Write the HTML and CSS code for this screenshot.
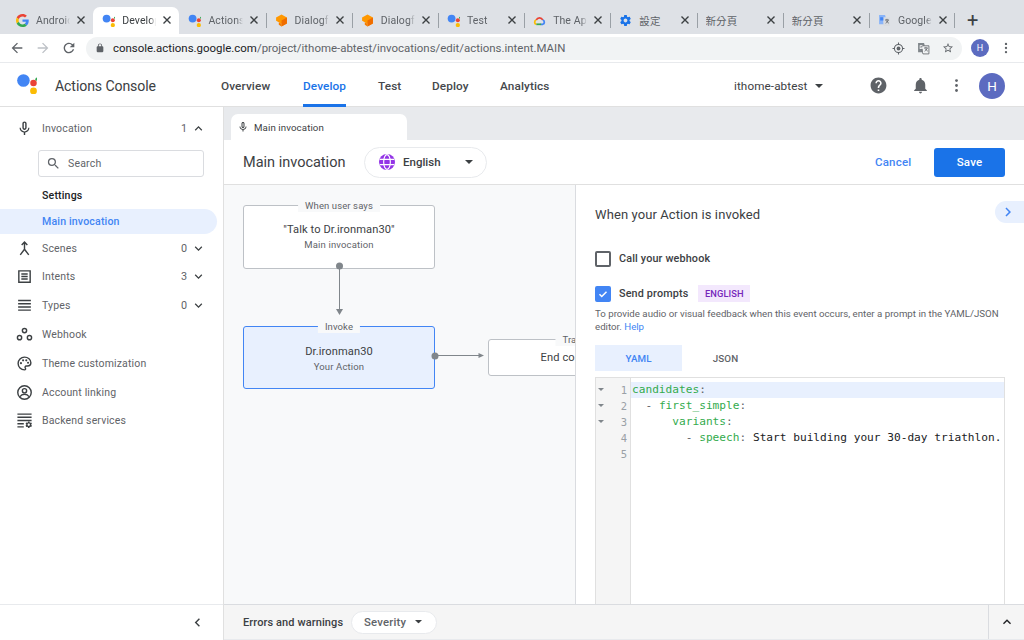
FILE: index.html
```html
<!DOCTYPE html>
<html lang="en">
<head>
<meta charset="utf-8">
<title>Actions Console</title>
<link rel="stylesheet" href="styles.css">
</head>
<body>
<svg class="sprite" aria-hidden="true">
  <symbol id="assistant" viewBox="0 0 24 24"><circle cx="8.5" cy="8.5" r="7.2" fill="#4285f4"/><circle cx="20" cy="11.5" r="3.7" fill="#ea4335"/><circle cx="20" cy="20.5" r="3.9" fill="#fbbc04"/><circle cx="24" cy="7" r="1.9" fill="#34a853"/></symbol>
  <symbol id="gfav" viewBox="0 0 48 48"><path fill="#EA4335" d="M24 9.5c3.54 0 6.71 1.22 9.21 3.6l6.85-6.85C35.9 2.38 30.47 0 24 0 14.62 0 6.51 5.38 2.56 13.22l7.98 6.19C12.43 13.72 17.74 9.5 24 9.5z"/><path fill="#4285F4" d="M46.98 24.55c0-1.57-.15-3.09-.38-4.55H24v9.02h12.94c-.58 2.96-2.26 5.48-4.78 7.18l7.73 6c4.51-4.18 7.09-10.36 7.09-17.65z"/><path fill="#FBBC05" d="M10.53 28.59c-.48-1.45-.76-2.99-.76-4.59s.27-3.14.76-4.59l-7.98-6.19C.92 16.46 0 20.12 0 24c0 3.88.92 7.54 2.56 10.78l7.97-6.19z"/><path fill="#34A853" d="M24 48c6.48 0 11.93-2.13 15.89-5.81l-7.73-6c-2.15 1.45-4.92 2.3-8.16 2.3-6.26 0-11.57-4.22-13.47-9.91l-7.98 6.19C6.51 42.62 14.62 48 24 48z"/></symbol>
  <symbol id="dialogflow" viewBox="0 0 24 24"><path fill="#ff9800" d="M12 1 22 6.500V17.500L12 23V18L2 12.500V6.500z"/><path fill="#ef6c00" d="M12 12 22 6.500V17.500L12 23z"/><path fill="#f57c00" d="M2 12.500 12 18V23L7 20V15z"/></symbol>
  <symbol id="cloud" viewBox="0 0 24 24"><path fill="none" stroke="#ea4335" stroke-width="3.200" d="M6 11a6.500 6.500 0 0 1 12 0"/><path fill="none" stroke="#4285f4" stroke-width="3.200" d="M18 11a4.200 4.200 0 0 1 0 8h-4"/><path fill="none" stroke="#34a853" stroke-width="3.200" d="M6 19h9"/><path fill="none" stroke="#fbbc04" stroke-width="3.200" d="M6 19a4.200 4.200 0 0 1 0-8"/></symbol>
  <symbol id="gear" viewBox="0 0 24 24"><path d="M19.43 12.98c.04-.32.07-.64.07-.98s-.03-.66-.07-.98l2.110-1.650c.19-.15.24-.42.12-.64l-2-3.460c-.12-.22-.39-.3-.61-.22l-2.490 1c-.52-.4-1.080-.73-1.690-.98l-.38-2.650C14.460 2.180 14.250 2 14 2h-4c-.25 0-.46.18-.49.42l-.38 2.650c-.61.25-1.170.59-1.690.98l-2.490-1c-.23-.09-.49 0-.61.22l-2 3.460c-.13.22-.07.49.12.64l2.110 1.650c-.04.32-.07.65-.07.98s.03.66.07.98l-2.110 1.650c-.19.15-.24.42-.12.64l2 3.460c.12.22.39.3.61.22l2.490-1c.52.4 1.080.73 1.690.98l.38 2.650c.03.24.24.42.49.42h4c.25 0 .46-.18.49-.42l.38-2.650c.61-.25 1.170-.59 1.690-.98l2.490 1c.23.09.49 0 .61-.22l2-3.460c.12-.22.07-.49-.12-.64l-2.110-1.650zM12 15.500c-1.930 0-3.500-1.570-3.500-3.500s1.570-3.500 3.500-3.500 3.500 1.570 3.500 3.500-1.570 3.500-3.500 3.500z"/></symbol>
  <symbol id="translate" viewBox="0 0 24 24"><path fill="#8ab4f8" d="M2 2h11l1 3v14H2z"/><path fill="#dadce0" d="M9 6h13v16H11l-1-3z"/><path fill="#4285f4" d="M4 6h6v6H4z"/><path fill="none" stroke="#5f6368" stroke-width="1.500" d="M13 11h7M16.500 9v2M19 11c-1 3-3 5-5 6M15 12c1 2 3 4 5 5"/></symbol>
  <symbol id="translate-grey" viewBox="0 0 24 24"><path fill="#80868b" d="M2 2h11l1 3v14H2z"/><path fill="#f1f3f4" stroke="#5f6368" stroke-width="1.500" d="M9 7h13v15H11l-1-3z"/><path fill="#fff" d="M5 6h5v1.500H6.500v4H9V10H7.500V8.800H10.500V13H5z"/><path fill="none" stroke="#5f6368" stroke-width="1.500" d="M13 11h7M16.500 9v2M19 11c-1 3-3 5-5 6M15 12c1 2 3 4 5 5"/></symbol>
  <symbol id="close" viewBox="0 0 12 12"><path fill="none" stroke="#3c4043" stroke-width="1.400" d="M2.500 2.500l7 7M9.500 2.500l-7 7"/></symbol>
  <symbol id="mic" viewBox="0 0 24 24"><path d="M12 14c1.660 0 2.990-1.340 2.990-3L15 5c0-1.660-1.340-3-3-3S9 3.340 9 5v6c0 1.660 1.340 3 3 3zm-1-9c0-.55.45-1 1-1s1 .45 1 1v6c0 .55-.45 1-1 1s-1-.45-1-1V5zm6.300 6c0 3-2.540 5.100-5.300 5.100S6.700 14 6.700 11H5c0 3.410 2.720 6.230 6 6.720V21h2v-3.280c3.280-.48 6-3.300 6-6.720h-1.700z"/></symbol>
  <symbol id="more" viewBox="0 0 24 24"><circle cx="12" cy="5" r="2"/><circle cx="12" cy="12" r="2"/><circle cx="12" cy="19" r="2"/></symbol>
  <symbol id="down" viewBox="0 0 24 24"><path d="M16.590 8.590 12 13.170 7.410 8.590 6 10l6 6 6-6z"/></symbol>
  <symbol id="up" viewBox="0 0 24 24"><path d="M12 8l-6 6 1.410 1.410L12 10.830l4.590 4.580L18 14z"/></symbol>
  <symbol id="caret" viewBox="0 0 10 5"><path d="M0 0h10L5 5z"/></symbol>
</svg>

<header class="tabstrip">
  <div class="tab"><svg class="fav"><use href="#gfav"/></svg><span class="tab-label">Android</span><svg class="x"><use href="#close"/></svg></div>
  <div class="tab tab-active"><svg class="fav"><use href="#assistant"/></svg><span class="tab-label">Develop</span><svg class="x"><use href="#close"/></svg></div>
  <div class="tab"><svg class="fav"><use href="#assistant"/></svg><span class="tab-label">Actions</span><svg class="x"><use href="#close"/></svg></div>
  <div class="tab tab-sep"><svg class="fav"><use href="#dialogflow"/></svg><span class="tab-label">Dialogflow</span><svg class="x"><use href="#close"/></svg></div>
  <div class="tab tab-sep"><svg class="fav"><use href="#dialogflow"/></svg><span class="tab-label">Dialogflow</span><svg class="x"><use href="#close"/></svg></div>
  <div class="tab tab-sep"><svg class="fav"><use href="#assistant"/></svg><span class="tab-label">Test</span><svg class="x"><use href="#close"/></svg></div>
  <div class="tab tab-sep"><svg class="fav"><use href="#cloud"/></svg><span class="tab-label">The App</span><svg class="x"><use href="#close"/></svg></div>
  <div class="tab tab-sep"><svg class="fav gear-blue"><use href="#gear"/></svg><span class="tab-label cjk">設定</span><svg class="x"><use href="#close"/></svg></div>
  <div class="tab tab-sep"><span class="tab-label cjk">新分頁</span><svg class="x"><use href="#close"/></svg></div>
  <div class="tab tab-sep"><span class="tab-label cjk">新分頁</span><svg class="x"><use href="#close"/></svg></div>
  <div class="tab tab-sep tab-last"><svg class="fav"><use href="#translate"/></svg><span class="tab-label">Google</span><svg class="x"><use href="#close"/></svg></div>
  <span class="newtab">+</span>
</header>

<nav class="toolbar">
  <svg class="tb-btn" viewBox="0 0 24 24"><path fill="#5f6368" d="M20 11H7.830l5.590-5.590L12 4l-8 8 8 8 1.410-1.410L7.830 13H20z"/></svg>
  <svg class="tb-btn" viewBox="0 0 24 24"><path fill="#bdc1c6" d="M12 4l-1.410 1.410L16.170 11H4v2h12.170l-5.580 5.590L12 20l8-8z"/></svg>
  <svg class="tb-btn" viewBox="0 0 24 24"><path fill="#5f6368" d="M17.650 6.350A7.958 7.958 0 0 0 12 4c-4.420 0-7.990 3.580-7.990 8s3.570 8 7.990 8c3.730 0 6.840-2.550 7.730-6h-2.080A5.990 5.990 0 0 1 12 18c-3.310 0-6-2.690-6-6s2.690-6 6-6c1.660 0 3.140.69 4.220 1.780L13 11h7V4l-2.350 2.350z"/></svg>
  <div class="omnibox">
    <svg class="lock" viewBox="0 0 24 24"><path fill="#5f6368" d="M18 8h-1V6c0-2.760-2.240-5-5-5S7 3.240 7 6v2H6c-1.100 0-2 .9-2 2v10c0 1.100.9 2 2 2h12c1.100 0 2-.9 2-2V10c0-1.100-.9-2-2-2zM9 6c0-1.660 1.340-3 3-3s3 1.340 3 3v2H9V6z"/></svg>
    <span class="url"><b>console.actions.google.com</b>/project/ithome-abtest/invocations/edit/actions.intent.MAIN</span>
    <svg class="omni-icon" viewBox="0 0 24 24"><circle cx="12" cy="12" r="7.500" fill="none" stroke="#5f6368" stroke-width="2"/><circle cx="12" cy="12" r="3.500" fill="#5f6368"/><path stroke="#5f6368" stroke-width="2" d="M12 1v4M12 19v4M1 12h4M19 12h4"/></svg>
    <svg class="omni-icon"><use href="#translate-grey"/></svg>
    <svg class="omni-icon" viewBox="0 0 24 24"><path fill="#5f6368" d="M22 9.240l-7.190-.62L12 2 9.190 8.630 2 9.240l5.460 4.730L5.820 21 12 17.270 18.180 21l-1.630-7.030L22 9.240zM12 15.400l-3.760 2.270 1-4.280-3.320-2.880 4.380-.38L12 6.100l1.710 4.040 4.380.38-3.320 2.880 1 4.280L12 15.400z"/></svg>
  </div>
  <span class="profile-small">H</span>
  <svg class="chrome-more" fill="#5f6368"><use href="#more"/></svg>
</nav>

<header class="appbar">
  <svg class="logo"><use href="#assistant"/></svg>
  <span class="brand">Actions Console</span>
  <a class="nav nav-overview">Overview</a>
  <a class="nav nav-develop">Develop</a>
  <a class="nav nav-test">Test</a>
  <a class="nav nav-deploy">Deploy</a>
  <a class="nav nav-analytics">Analytics</a>
  <span class="project">ithome-abtest</span>
  <svg class="project-caret" fill="#3c4043"><use href="#caret"/></svg>
  <svg class="app-icon help" viewBox="0 0 24 24"><path fill="#5f6368" d="M12 2C6.480 2 2 6.480 2 12s4.480 10 10 10 10-4.480 10-10S17.520 2 12 2zm1 17h-2v-2h2v2zm2.070-7.750l-.9.920C13.450 12.900 13 13.500 13 15h-2v-.5c0-1.100.45-2.100 1.170-2.830l1.240-1.260c.37-.36.590-.86.590-1.410 0-1.100-.9-2-2-2s-2 .9-2 2H8c0-2.210 1.790-4 4-4s4 1.790 4 4c0 .88-.36 1.680-.93 2.250z"/></svg>
  <svg class="app-icon bell" viewBox="0 0 24 24"><path fill="#5f6368" d="M12 22c1.100 0 2-.9 2-2h-4c0 1.100.9 2 2 2zm6-6v-5c0-3.070-1.630-5.640-4.500-6.320V4c0-.83-.67-1.500-1.500-1.500s-1.500.67-1.500 1.500v.68C7.640 5.360 6 7.920 6 11v5l-2 2v1h16v-1l-2-2z"/></svg>
  <svg class="app-icon dots" fill="#5f6368"><use href="#more"/></svg>
  <span class="avatar">H</span>
</header>

<div class="content">
  <aside class="sidebar">
    <div class="side-scroll">
      <div class="side-row">
        <svg class="side-icon" fill="#3c4043"><use href="#mic"/></svg><span class="side-label">Invocation</span><span class="count">1</span><svg class="chev" fill="#3c4043"><use href="#up"/></svg>
      </div>
      <div class="search">
        <svg class="search-icon" viewBox="0 0 24 24"><path fill="#5f6368" d="M15.500 14h-.79l-.28-.27A6.471 6.471 0 0 0 16 9.500 6.500 6.500 0 1 0 9.500 16c1.610 0 3.090-.59 4.230-1.570l.27.28v.79l5 4.990L20.490 19l-4.990-5zm-6 0C7.010 14 5 11.990 5 9.500S7.010 5 9.500 5 14 7.010 14 9.500 11.990 14 9.500 14z"/></svg>
        <span class="search-text">Search</span>
      </div>
      <div class="sub-item">Settings</div>
      <div class="sub-item sub-active">Main invocation</div>
      <div class="side-row">
        <svg class="side-icon" viewBox="0 0 24 24"><path fill="none" stroke="#3c4043" stroke-width="2" d="M12 4v9M12 13l-6 8M12 13l6 8M8 7l4-4 4 4"/></svg><span class="side-label">Scenes</span><span class="count">0</span><svg class="chev" fill="#3c4043"><use href="#down"/></svg>
      </div>
      <div class="side-row">
        <svg class="side-icon" viewBox="0 0 24 24"><path fill="none" stroke="#3c4043" stroke-width="2" d="M4 4h16v16H4zM7.500 8.500h9M7.500 12h9M7.500 15.500h9"/></svg><span class="side-label">Intents</span><span class="count">3</span><svg class="chev" fill="#3c4043"><use href="#down"/></svg>
      </div>
      <div class="side-row">
        <svg class="side-icon" viewBox="0 0 24 24"><path fill="none" stroke="#3c4043" stroke-width="2" d="M3 5h18M3 9.500h18M3 14h18M3 18.500h18"/></svg><span class="side-label">Types</span><span class="count">0</span><svg class="chev" fill="#3c4043"><use href="#down"/></svg>
      </div>
      <div class="side-row">
        <svg class="side-icon" viewBox="0 0 24 24"><g fill="none" stroke="#3c4043" stroke-width="2"><circle cx="12" cy="6.500" r="3"/><circle cx="5" cy="16.500" r="3"/><circle cx="19" cy="16.500" r="3"/></g></svg><span class="side-label">Webhook</span>
      </div>
      <div class="side-row">
        <svg class="side-icon" viewBox="0 0 24 24"><path fill="none" stroke="#3c4043" stroke-width="2" d="M12 3c-5 0-9 4-9 9s4 9 9 9c1.500 0 2-1.500 1.200-2.500-1-1.300-.2-3 1.300-3H16c3 0 5-2 5-4.500C21 6.500 17 3 12 3z"/><g fill="#3c4043"><circle cx="7" cy="11.500" r="1.500"/><circle cx="10" cy="7.500" r="1.500"/><circle cx="14.500" cy="7.500" r="1.500"/><circle cx="17" cy="11" r="1.500"/></g></svg><span class="side-label">Theme customization</span>
      </div>
      <div class="side-row">
        <svg class="side-icon" viewBox="0 0 24 24"><g fill="none" stroke="#3c4043" stroke-width="2"><circle cx="12" cy="12" r="9.500"/><circle cx="12" cy="9.500" r="3"/><path d="M5.500 18c1.500-2.500 4-3.500 6.500-3.500s5 1 6.500 3.500"/></g></svg><span class="side-label">Account linking</span>
      </div>
      <div class="side-row">
        <svg class="side-icon" viewBox="0 0 24 24" fill="#3c4043"><path fill="none" stroke="#3c4043" stroke-width="2" d="M2 3h20M2 7.500h20M2 12h20M2 16.500h9M2 21h9"/><use href="#gear" x="12.500" y="12.500" width="11" height="11"/></svg><span class="side-label">Backend services</span>
      </div>
    </div>
    <div class="side-foot"><svg class="collapse" viewBox="0 0 24 24"><path fill="#3c4043" d="M15.410 7.410 14 6l-6 6 6 6 1.410-1.410L10.830 12z"/></svg></div>
  </aside>

  <main class="main">
    <div class="doc-tabs">
      <div class="doc-tab"><svg class="doc-mic" fill="#3c4043"><use href="#mic"/></svg>Main invocation</div>
    </div>
    <div class="doc-head">
      <h1 class="doc-title">Main invocation</h1>
      <div class="lang">
        <svg class="globe" viewBox="0 0 24 24"><circle cx="12" cy="12" r="12" fill="#9334e6"/><g fill="none" stroke="#fff" stroke-width="1.700"><ellipse cx="12" cy="12" rx="5" ry="11"/><path d="M1 8h22M1 16h22"/></g></svg>
        <span class="lang-name">English</span>
        <svg class="lang-caret" fill="#3c4043"><use href="#caret"/></svg>
      </div>
      <span class="cancel">Cancel</span>
      <span class="save">Save</span>
    </div>
    <div class="split">
      <section class="canvas">
        <svg class="wires">
          <circle cx="115.500" cy="81" r="3.500" fill="#80868b"/>
          <path d="M115.500 81V125" stroke="#80868b" stroke-width="1"/>
          <path d="M112 124h7l-3.500 6z" fill="#80868b"/>
          <path d="M211 170.500H255" stroke="#80868b" stroke-width="1"/>
          <path d="M254.500 168v5l5.500-2.500z" fill="#80868b"/>
        </svg>
        <div class="node node-say">
          <span class="legend">When user says</span>
          <div class="node-title">"Talk to Dr.ironman30"</div>
          <div class="node-sub">Main invocation</div>
        </div>
        <div class="node node-invoke">
          <span class="legend legend-blue">Invoke</span>
          <div class="node-title">Dr.ironman30</div>
          <div class="node-sub">Your Action</div>
        </div>
        <div class="node node-end">
          <span class="legend">Transition</span>
          <div class="node-title">End conversation</div>
        </div>
        <svg class="wire-dot"><circle cx="4" cy="4" r="3.500" fill="#80868b"/></svg>
      </section>
      <section class="panel">
        <span class="panel-toggle"><svg class="toggle-icon" viewBox="0 0 24 24"><path fill="#4285f4" d="M10 6 8.590 7.410 13.170 12l-4.580 4.590L10 18l6-6z"/></svg></span>
        <h2 class="panel-title">When your Action is invoked</h2>
        <div class="check-row check-first"><span class="checkbox"></span><span class="check-label">Call your webhook</span></div>
        <div class="check-row check-second">
          <span class="checkbox checkbox-on"><svg class="tick" viewBox="0 0 24 24"><path fill="none" stroke="#fff" stroke-width="3" d="M5 12.500l4.500 4.500L19 7.500"/></svg></span>
          <span class="check-label">Send prompts</span><span class="chip">ENGLISH</span>
        </div>
        <p class="hint">To provide audio or visual feedback when this event occurs, enter a prompt in the YAML/JSON editor. <a class="help-link">Help</a></p>
        <div class="fmt-tabs"><span class="fmt fmt-on">YAML</span><span class="fmt">JSON</span></div>
        <div class="editor">
          <div class="gutter">
            <div class="gline"><svg class="fold" fill="#80868b"><use href="#caret"/></svg>1</div>
            <div class="gline"><svg class="fold" fill="#80868b"><use href="#caret"/></svg>2</div>
            <div class="gline"><svg class="fold" fill="#80868b"><use href="#caret"/></svg>3</div>
            <div class="gline">4</div>
            <div class="gline">5</div>
          </div>
          <pre class="code"><span class="cl cl-on"><i>candidates</i><u>:</u></span><span class="cl">  <u>-</u> <i>first_simple</i><u>:</u></span><span class="cl">      <i>variants</i><u>:</u></span><span class="cl">        <u>-</u> <i>speech</i><u>:</u> Start building your 30-day triathlon.</span><span class="cl"> </span></pre>
        </div>
      </section>
    </div>
    <footer class="issues">
      <span class="issues-title">Errors and warnings</span>
      <span class="severity">Severity<svg class="sev-caret" fill="#3c4043"><use href="#caret"/></svg></span>
      <span class="issues-toggle"><svg class="issues-chev" fill="#202124"><use href="#up"/></svg></span>
    </footer>
  </main>
</div>
</body>
</html>
```
FILE: styles.css
```css
* { box-sizing: border-box; }
html, body { margin: 0; height: 100%; }
body {
  width: 1024px; height: 640px; overflow: hidden;
  display: flex; flex-direction: column;
  font-family: Roboto, "Noto Sans CJK TC", sans-serif;
  color: #3c4043; background: #fff;
}
.sprite { display: none; }

/* browser tabs */
.tabstrip { height: 34px; flex: none; background: #dee1e6; display: flex; align-items: flex-end; padding-left: 7px; }
.tab {
  width: 86.2px; height: 27px; flex: none; display: flex; align-items: center;
  padding: 0 6px 1px 9px; font-size: 10.5px; color: #5f6368; position: relative; letter-spacing: .1px;
}
.tab-active { background: #fff; border-radius: 7px 7px 0 0; color: #3c4043; }
.tab-sep::before { content: ""; position: absolute; left: 0; top: 6px; height: 15px; width: 1px; background: #9aa0a6; }
.tab-last::after { content: ""; position: absolute; right: 0; top: 6px; height: 15px; width: 1px; background: #9aa0a6; }
.fav { width: 13px; height: 13px; flex: none; margin-right: 7px; }
.gear-blue { fill: #1a73e8; }
.tab-label {
  flex: 1; min-width: 0; overflow: hidden; white-space: nowrap; margin-right: 5px;
  -webkit-mask-image: linear-gradient(90deg, #000 82%, transparent 100%);
  mask-image: linear-gradient(90deg, #000 82%, transparent 100%);
}
.cjk { font-family: "Noto Sans CJK TC", sans-serif; font-size: 10.5px; -webkit-mask-image: none; mask-image: none; }
.x { width: 12px; height: 12px; flex: none; }
.newtab { font-size: 20px; font-weight: 400; color: #3c4043; margin-left: 12px; line-height: 27px; height: 27px; }

/* browser toolbar */
.toolbar { height: 29px; flex: none; display: flex; align-items: center; border-bottom: 1px solid #e8eaed; padding-left: 9px; background: #fff; }
.tb-btn { width: 16px; height: 16px; margin-right: 10px; flex: none; }
.omnibox { width: 876px; height: 23px; background: #f1f3f4; border-radius: 12px; display: flex; align-items: center; padding-left: 9px; flex: none; margin-left: -1px; }
.lock { width: 10px; height: 10px; flex: none; margin-right: 8px; }
.url { font-size: 11.45px; color: #5f6368; flex: 1; white-space: nowrap; }
.url b { font-weight: 400; color: #202124; }
.omni-icon { width: 13px; height: 13px; flex: none; margin-right: 12px; }
.omni-icon:last-child { margin-right: 8px; width: 12px; height: 12px; }
.profile-small { width: 18px; height: 18px; margin-left: 9px; border-radius: 50%; background: #5c6bc0; color: #fff; font-size: 9px; display: flex; align-items: center; justify-content: center; flex: none; }
.chrome-more { width: 14px; height: 14px; margin-left: 10px; flex: none; }

/* app bar */
.appbar { height: 44px; flex: none; display: flex; align-items: center; border-bottom: 1px solid #e0e0e0; padding: 2px 0 0 16px; background: #fff; }
.logo { width: 21px; height: 21px; flex: none; overflow: visible; margin-top: -4px; }
.brand { font-size: 14.1px; margin-left: 18px; width: 166px; color: #3c4043; flex: none; letter-spacing: -.1px; }
.nav { font-size: 11.8px; font-weight: 500; color: #45484c; height: 41px; display: flex; align-items: center; flex: none; position: relative; letter-spacing: .1px; }
.nav-overview { width: 82px; }
.nav-develop { width: 75px; color: #1a73e8; }
.nav-develop::after { content: ""; position: absolute; left: 0; width: 43px; bottom: -1px; height: 3px; background: #1a73e8; }
.nav-test { width: 54px; }
.nav-deploy { width: 68px; }
.nav-analytics { width: 234px; }
.project { font-size: 11.7px; width: 81px; flex: none; letter-spacing: .1px; }
.project-caret { width: 8px; height: 4px; flex: none; margin-right: 46px; }
.app-icon { width: 19px; height: 19px; flex: none; }
.bell { margin-left: 23px; }
.dots { margin-left: 18px; width: 17px; height: 17px; }
.avatar { width: 26px; height: 26px; border-radius: 50%; margin-left: 14px; background: #5c6bc0; color: #fff; font-size: 13.5px; display: flex; align-items: center; justify-content: center; flex: none; }

/* layout */
.content { flex: 1; min-height: 0; display: flex; }
.sidebar { width: 224px; flex: none; display: flex; flex-direction: column; border-right: 1px solid #e0e0e0; background: #fff; }
.side-scroll { flex: 1; padding-top: 7px; }
.side-row { height: 28.8px; display: flex; align-items: center; padding-left: 16px; padding-right: 17px; }
.side-icon { width: 17px; height: 17px; flex: none; margin-right: 9px; overflow: visible; }
.side-label { font-size: 10.5px; color: #5f6368; flex: 1; letter-spacing: .15px; white-space: nowrap; }
.count { font-size: 10.8px; color: #5f6368; margin-right: 4px; }
.chev { width: 15px; height: 15px; flex: none; }
.search { width: 166px; height: 27px; margin: 7px 0 0 38px; border: 1px solid #dadce0; border-radius: 3px; display: flex; align-items: center; padding-left: 7px; }
.search-icon { width: 15px; height: 15px; flex: none; margin-right: 7px; }
.search-text { font-size: 10.5px; color: #5f6368; letter-spacing: .2px; }
.sub-item { height: 25px; display: flex; align-items: center; padding-left: 42px; font-size: 10.6px; font-weight: 500; color: #202124; width: 217px; letter-spacing: .15px; }
.search + .sub-item { margin-top: 6px; }
.sub-active { background: #e8f0fe; color: #4285f4; border-radius: 0 13px 13px 0; margin-top: 1px; }
.side-foot { height: 36px; flex: none; border-top: 1px solid #e8eaed; display: flex; align-items: center; justify-content: flex-end; padding-right: 17px; }
.collapse { width: 17px; height: 17px; }

.main { flex: 1; min-width: 0; display: flex; flex-direction: column; background: #fff; }
.doc-tabs { height: 33px; flex: none; background: #e8eaed; display: flex; align-items: flex-end; padding-left: 7px; }
.doc-tab { width: 176px; height: 26px; background: #fff; border-radius: 7px 7px 0 0; display: flex; align-items: center; font-size: 9.7px; color: #3c4043; padding: 0 0 0 6px; letter-spacing: .1px; }
.doc-mic { width: 12px; height: 12px; margin-right: 5px; flex: none; }
.doc-head { height: 45px; flex: none; display: flex; align-items: center; padding-left: 19px; border-bottom: 1px solid #e0e0e0; }
.doc-title { margin: 0; font-size: 14.5px; font-weight: 400; color: #3c4043; width: 121px; flex: none; }
.lang { width: 123px; height: 31px; border: 1px solid #e8eaed; border-radius: 16px; display: flex; align-items: center; padding-left: 14px; flex: none; }
.globe { width: 16px; height: 16px; flex: none; margin-right: 8px; }
.lang-name { font-size: 11.5px; font-weight: 500; width: 62px; flex: none; color: #3c4043; }
.lang-caret { width: 8px; height: 4px; flex: none; }
.cancel { margin-left: 388px; font-size: 11.5px; font-weight: 500; color: #4285f4; flex: none; width: 59px; letter-spacing: .2px; }
.save { width: 71px; height: 29px; background: #1a73e8; color: #fff; border-radius: 3px; display: flex; align-items: center; justify-content: center; font-size: 11.5px; font-weight: 500; flex: none; letter-spacing: .2px; }

.split { flex: 1; min-height: 0; display: flex; }
.canvas { width: 352px; flex: none; background: #f8f9fa; position: relative; overflow: hidden; border-right: 1px solid #dadce0; }
.wires { position: absolute; left: 0; top: 0; width: 352px; height: 300px; z-index: 2; }
.wire-dot { position: absolute; left: 207px; top: 166.500px; width: 8px; height: 8px; z-index: 3; }
.node { position: absolute; background: #fff; border: 1px solid #bdc1c6; border-radius: 3px; text-align: center; display: flex; flex-direction: column; align-items: center; justify-content: center; }
.node-say { left: 19px; top: 20px; width: 192px; height: 64px; padding-bottom: 1px; }
.node-invoke { left: 19px; top: 141px; width: 192px; height: 63px; background: #e8f0fe; border-color: #4285f4; padding-top: 1px; }
.node-end { left: 264px; top: 154px; width: 192px; height: 37px; }
.legend { position: absolute; top: -7px; left: 50%; transform: translateX(-50%); background: #f8f9fa; padding: 0 7px; font-size: 9.5px; line-height: 13px; color: #5f6368; white-space: nowrap; letter-spacing: .1px; }
.node-title { font-size: 11.1px; color: #3c4043; white-space: nowrap; letter-spacing: .1px; }
.node-sub { font-size: 9.5px; color: #5f6368; margin-top: 3px; letter-spacing: .15px; }

.panel { flex: 1; min-width: 0; position: relative; padding: 0 19px; display: flex; flex-direction: column; background: #fff; }
.panel-toggle { position: absolute; right: 0; top: 16px; width: 29px; height: 22px; background: #e8f0fe; border-radius: 11px 0 0 11px; display: flex; align-items: center; padding-left: 4px; }
.toggle-icon { width: 18px; height: 18px; }
.panel-title { margin: 22px 0 0; font-size: 13px; line-height: 16px; font-weight: 400; color: #3c4043; letter-spacing: .1px; }
.check-row { display: flex; align-items: center; }
.check-first { margin-top: 27px; height: 17px; }
.check-second { margin-top: 18px; height: 17px; }
.checkbox { width: 16px; height: 16px; border: 2px solid #5f6368; border-radius: 2px; flex: none; margin-right: 8px; display: flex; align-items: center; justify-content: center; }
.checkbox-on { background: #4285f4; border-color: #4285f4; }
.tick { width: 12px; height: 12px; }
.check-label { font-size: 10.8px; font-weight: 500; color: #3c4043; letter-spacing: .15px; }
.chip { margin-left: 10px; background: #f3e8fd; color: #7627bb; font-size: 9.3px; font-weight: 500; height: 17px; width: 52px; display: flex; align-items: center; justify-content: center; letter-spacing: .1px; }
.hint { margin: 5px 0 0; font-size: 9.7px; line-height: 13px; color: #5f6368; width: 410px; }
.help-link { color: #4285f4; }
.fmt-tabs { display: flex; margin-top: 12px; height: 26px; flex: none; }
.fmt { width: 87px; display: flex; align-items: center; justify-content: center; font-size: 9.8px; font-weight: 500; color: #5f6368; letter-spacing: .1px; }
.fmt-on { background: #e8f0fe; color: #4285f4; }
.editor { margin-top: 6px; width: 410px; flex: 1; min-height: 0; border: 1px solid #e0e0e0; border-bottom: 0; display: flex; }
.gutter { width: 35px; flex: none; background: #f5f5f5; border-right: 1px solid #e0e0e0; padding-top: 4px; }
.gline { height: 16px; line-height: 16px; font-family: "DejaVu Sans Mono", monospace; font-size: 10.5px; color: #9aa0a6; text-align: right; padding-right: 3px; position: relative; }
.fold { position: absolute; left: 2px; top: 6px; width: 6px; height: 3px; }
.code { margin: 0; padding: 4px 0 0 1px; flex: 1; min-width: 0; font-family: "DejaVu Sans Mono", monospace; font-size: 11.16px; line-height: 16px; color: #202124; overflow: hidden; }
.cl { display: block; height: 16px; white-space: pre; margin-left: -1px; padding-left: 1px; }
.cl-on { background: #e8f0fe; }
.code i { font-style: normal; color: #33ab4d; }
.code u { text-decoration: none; color: #5f6368; }

.issues { height: 36px; flex: none; border-top: 1px solid #dadce0; background: #f5f5f5; display: flex; align-items: center; padding-left: 19px; border-bottom: 1px solid #e8eaed; }
.issues-title { font-size: 11px; font-weight: 500; color: #3c4043; width: 108px; flex: none; letter-spacing: .1px; }
.severity { width: 86px; height: 23px; border: 1px solid #e8eaed; background: #fff; border-radius: 12px; display: flex; align-items: center; padding-left: 12px; font-size: 11.3px; font-weight: 500; color: #5f6368; flex: none; letter-spacing: .2px; }
.sev-caret { width: 7px; height: 3.5px; margin-left: 9px; flex: none; }
.issues-toggle { margin-left: auto; width: 36px; height: 100%; border-left: 1px solid #dadce0; display: flex; align-items: center; justify-content: center; }
.issues-chev { width: 16px; height: 16px; }
```
